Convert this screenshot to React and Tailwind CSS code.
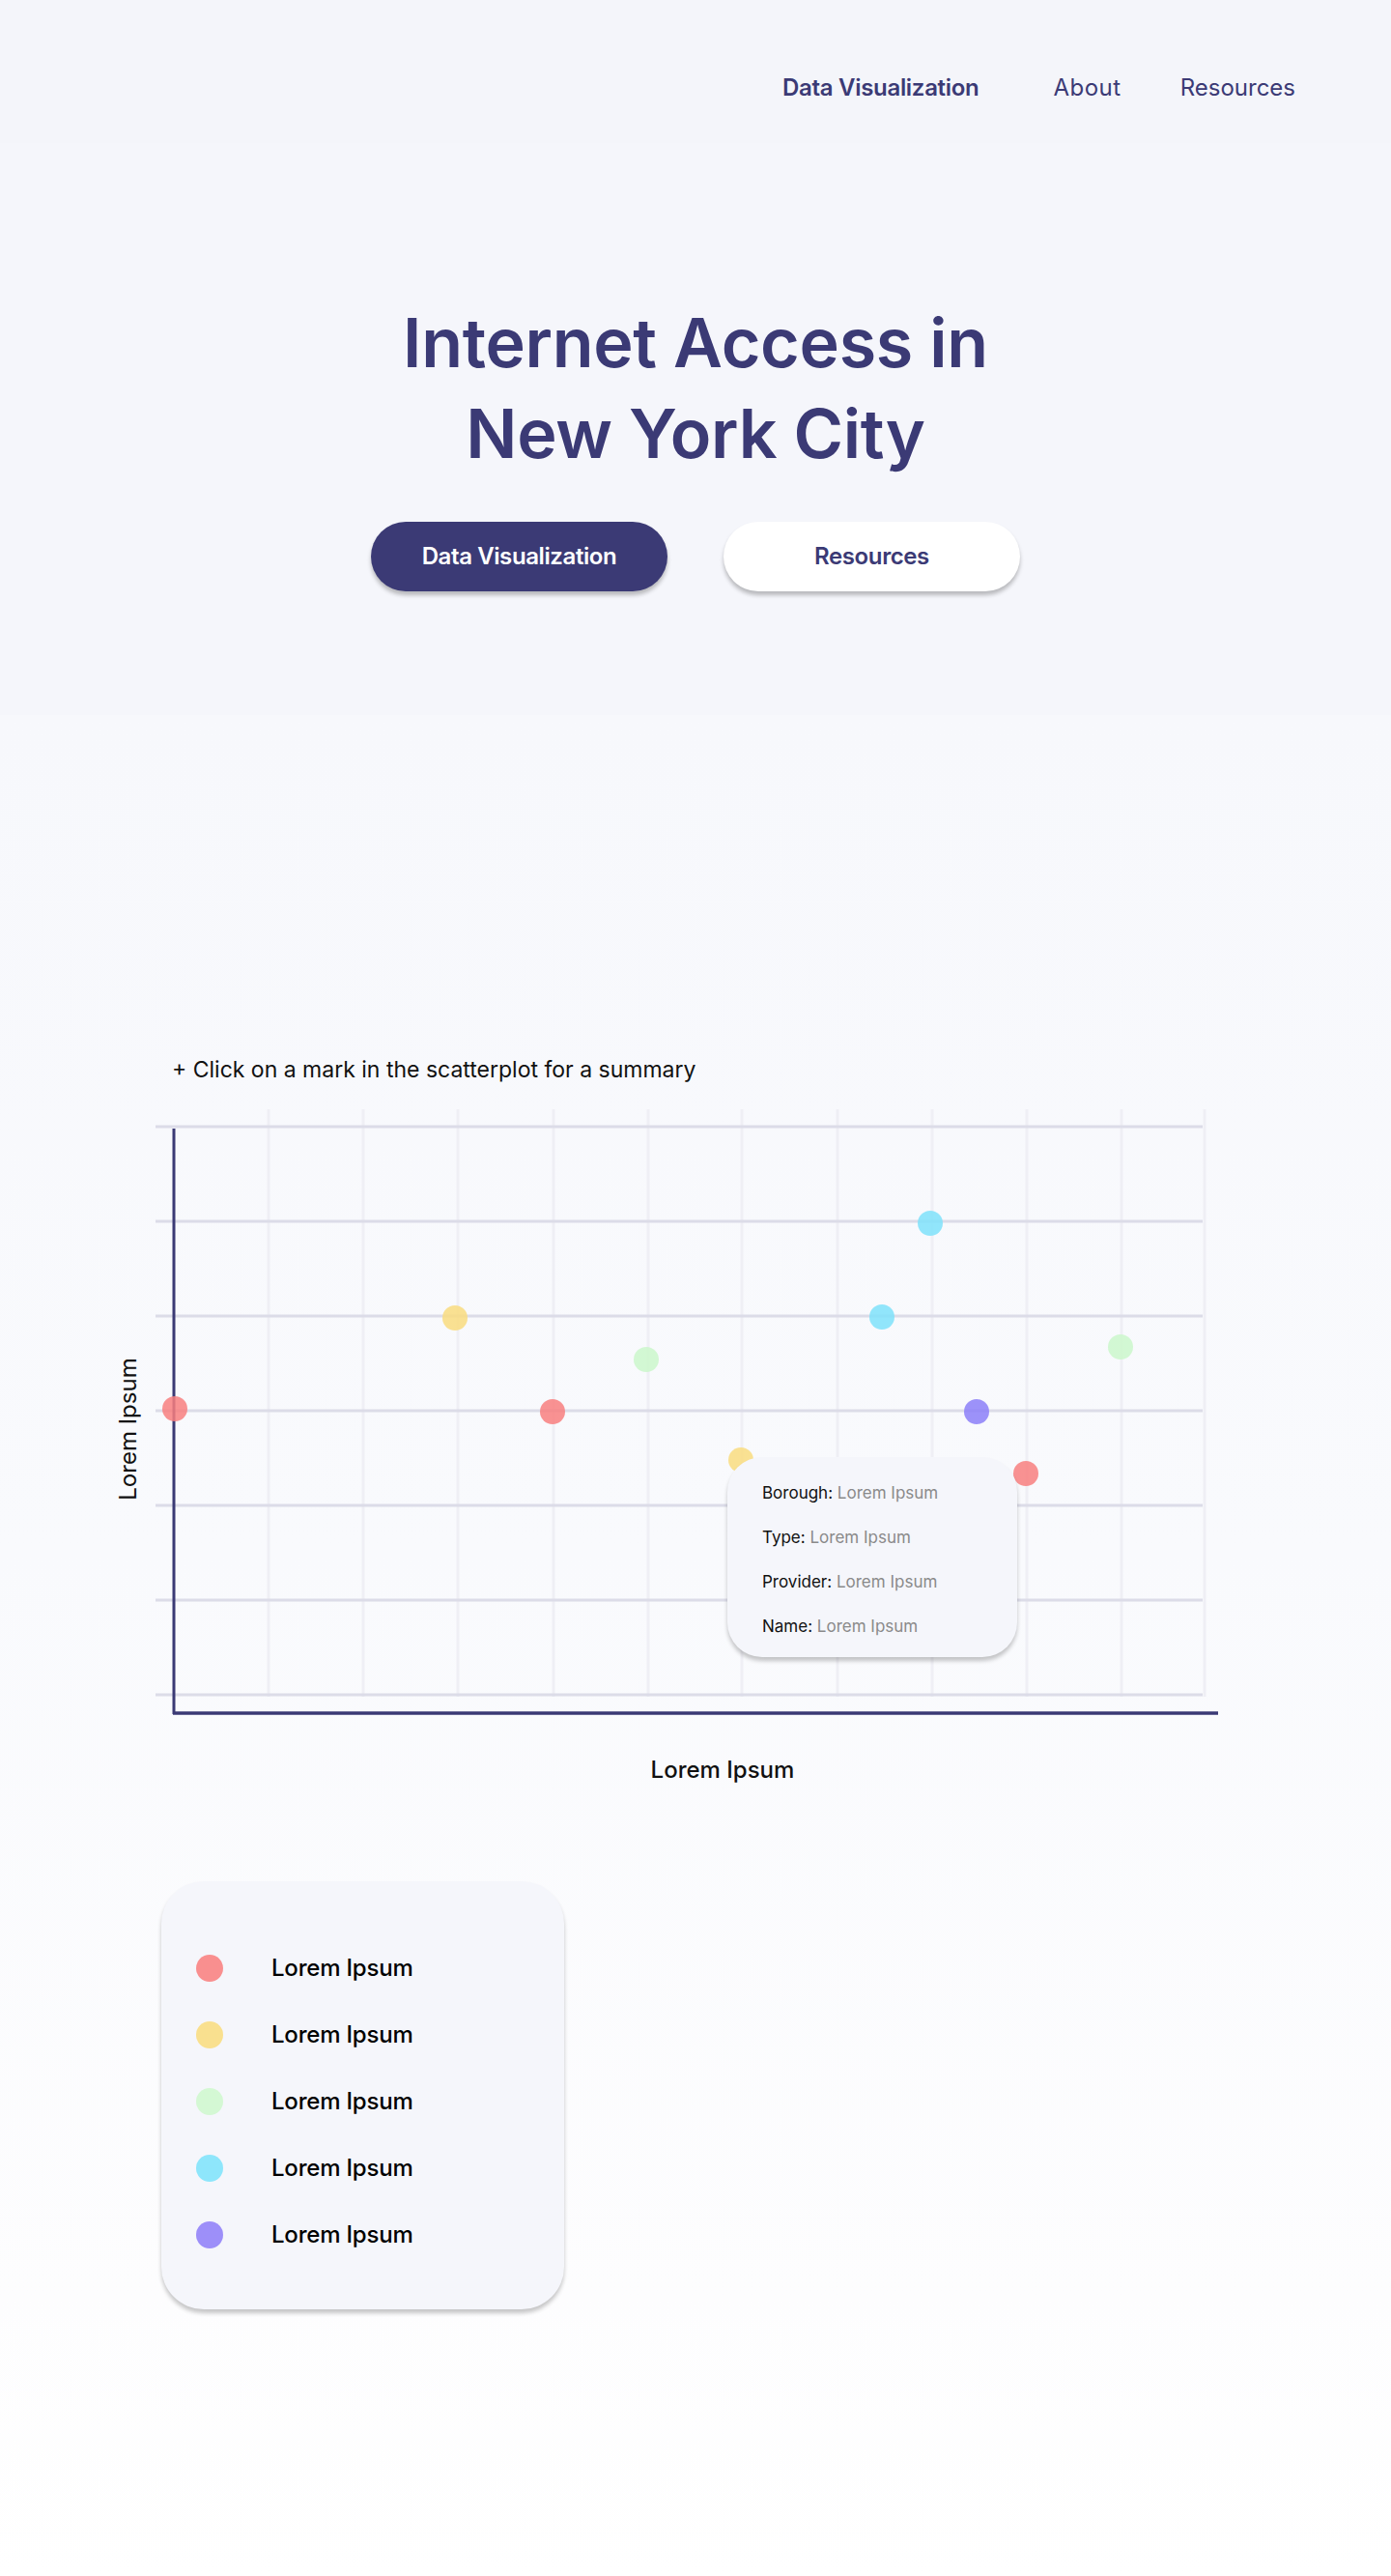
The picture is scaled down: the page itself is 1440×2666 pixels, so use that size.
import React from "react";

// scatterplot data, in chart-canvas pixels
const points = [
  { x: 26, y: 318, color: "#f87f7f" },
  { x: 316, y: 224, color: "#f9dc7f" },
  { x: 417, y: 321, color: "#f87f7f" },
  { x: 514, y: 267, color: "#cbf7cb" },
  { x: 612, y: 371, color: "#f9dc7f" },
  { x: 758, y: 223, color: "#7fe2fa" },
  { x: 808, y: 126, color: "#7fe2fa" },
  { x: 856, y: 321, color: "#8c7ff8" },
  { x: 907, y: 385, color: "#f87f7f" },
  { x: 1005, y: 254, color: "#cbf7cb" },
];

const rows = [26, 124, 222, 320, 418, 516, 614];
const cols = [123, 221, 319, 418, 516, 613, 712, 810, 908, 1006, 1092];

const legend = ["#f98f8f", "#f9e08f", "#d4f8d4", "#8ee6fb", "#9d8ff9"];

const details = [
  ["Borough:", "Lorem Ipsum"],
  ["Type:", "Lorem Ipsum"],
  ["Provider:", "Lorem Ipsum"],
  ["Name:", "Lorem Ipsum"],
];

function Header() {
  return (
    <header className="h-[148px] bg-[#f4f5fa] flex justify-end items-start pt-[75px] pr-[99px] text-[24px] leading-[32px] text-[#3b3a75]">
      <a className="font-semibold tracking-[-0.3px]">Data Visualization</a>
      <a className="ml-[77px] tracking-[0.5px]">About</a>
      <a className="ml-[61px]">Resources</a>
    </header>
  );
}

function Hero() {
  return (
    <section className="h-[592px] bg-[#f5f6fb] pt-[160px] flex flex-col items-center">
      <h1 className="text-[70px] leading-[94px] font-semibold tracking-[-0.3px] text-[#3b3a75] text-center">
        Internet Access in
        <br />
        New York City
      </h1>
      <div className="mt-[44px] flex gap-[58px]">
        <button className="w-[307px] h-[72px] rounded-full bg-[#3b3a75] text-white text-[24px] font-semibold tracking-[-0.4px] shadow-[0_4px_4px_rgba(0,0,0,0.25)]">
          Data Visualization
        </button>
        <button className="w-[307px] h-[72px] rounded-full bg-white text-[#3b3a75] text-[24px] font-semibold tracking-[-0.4px] shadow-[0_4px_4px_rgba(0,0,0,0.25)]">
          Resources
        </button>
      </div>
    </section>
  );
}

function Scatter() {
  return (
    <div className="relative w-[1110px] h-[640px]">
      <svg width="1110" height="640" viewBox="0 0 1110 640">
        {cols.map((x) => (
          <line key={x} x1={x} y1={8} x2={x} y2={616} stroke="#efeff5" strokeWidth="3" />
        ))}
        {rows.map((y) => (
          <line key={y} x1={6} y1={y} x2={1090} y2={y} stroke="#dcdce8" strokeWidth="3" />
        ))}
        <line x1={25} y1={28} x2={25} y2={634} stroke="#3b3a75" strokeWidth="3" />
        <line x1={24} y1={633} x2={1106} y2={633} stroke="#3b3a75" strokeWidth="3.5" />
        {points.map((p, i) => (
          <circle key={i} cx={p.x} cy={p.y} r="13" fill={p.color} fillOpacity="0.85" />
        ))}
      </svg>

      {/* tooltip for the selected mark */}
      <div className="absolute left-[598px] top-[368px] w-[300px] h-[207px] rounded-[36px] bg-[#f5f6fb] shadow-[0_4px_4px_rgba(0,0,0,0.22)] pt-[14px] pl-[36px] text-[17px] leading-[46px]">
        {details.map(([k, v]) => (
          <p key={k} className="text-[#111]">
            {k} <span className="text-[#8a8a8a]">{v}</span>
          </p>
        ))}
      </div>
    </div>
  );
}

function Legend() {
  return (
    <div className="ml-[167px] w-[417px] h-[443px] rounded-[44px] bg-[#f5f6fb] shadow-[0_4px_4px_rgba(0,0,0,0.22)] pt-[55px] pl-[36px]">
      {legend.map((c) => (
        <div key={c} className="h-[69px] flex items-center">
          <span className="w-[28px] h-[28px] rounded-full" style={{ backgroundColor: c }} />
          <span className="ml-[50px] text-[24px] font-medium tracking-[-0.2px] text-black">Lorem Ipsum</span>
        </div>
      ))}
    </div>
  );
}

export default function App() {
  return (
    <div className="w-full min-h-[2666px] flex flex-col font-['Inter',sans-serif]">
      <Header />
      <Hero />
      <section className="flex-1 bg-[linear-gradient(180deg,#f7f8fc_0%,#f9fafd_45%,#fdfdfe_85%,#ffffff_100%)] pt-[351px]">
        <p className="ml-[178px] text-[23px] leading-[32px] text-[#111]">
          + Click on a mark in the scatterplot for a summary
        </p>

        <div className="mt-[17px] ml-[110px] flex">
          <div className="w-[45px] flex items-center justify-center pt-[38px]">
            <span className="-rotate-90 whitespace-nowrap text-[24px] text-[#111]">Lorem Ipsum</span>
          </div>
          <Scatter />
        </div>

        <p className="mt-[36px] ml-[180px] w-[1136px] text-center text-[24px] leading-[32px] font-medium text-[#111]">
          Lorem Ipsum
        </p>

        <div className="mt-[99px]">
          <Legend />
        </div>
      </section>
    </div>
  );
}
